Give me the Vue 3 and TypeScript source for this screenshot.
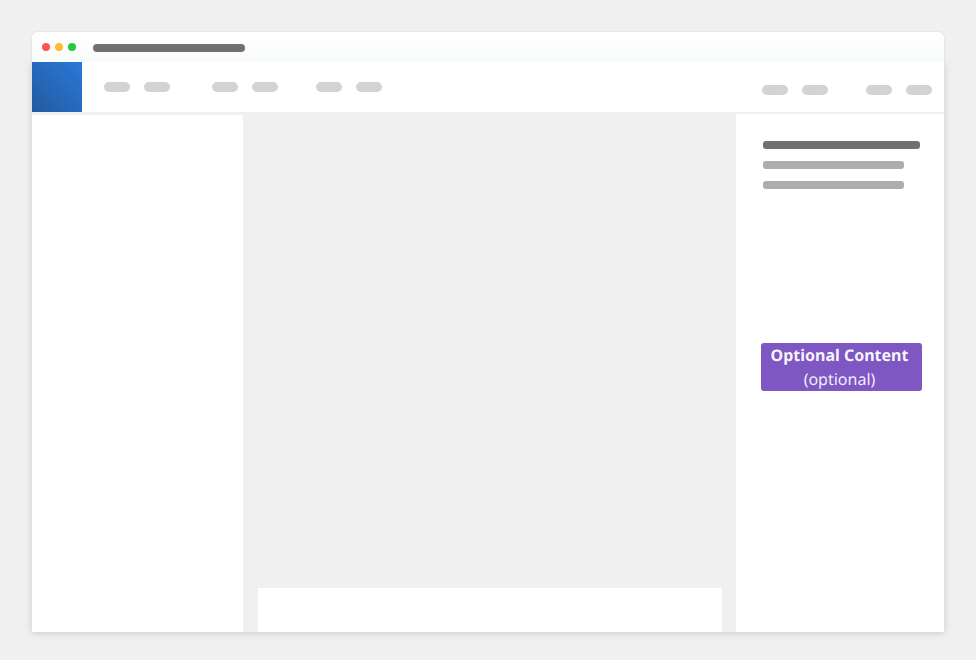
<script setup lang="ts">
const leftGroups = [2, 2, 2]
const rightGroups = [2, 2]
</script>

<template>
  <div class="page">
    <div class="window">
      <div class="titlebar">
        <div class="dots">
          <span class="dot red"></span>
          <span class="dot yellow"></span>
          <span class="dot green"></span>
        </div>
        <div class="url"></div>
      </div>

      <div class="content">
        <div class="nav">
          <div class="logo"></div>
          <div class="nav-left">
            <div v-for="(n, i) in leftGroups" :key="i" class="pill-group">
              <span v-for="p in n" :key="p" class="pill"></span>
            </div>
          </div>
          <div class="nav-right">
            <div v-for="(n, i) in rightGroups" :key="i" class="pill-group">
              <span v-for="p in n" :key="p" class="pill"></span>
            </div>
          </div>
        </div>

        <div class="body">
          <aside class="sidebar"></aside>
          <main class="main">
            <div class="card"></div>
          </main>
          <aside class="panel">
            <div class="lines">
              <div class="line dark"></div>
              <div class="line"></div>
              <div class="line"></div>
            </div>
            <div class="badge">
              <strong>Optional Content</strong>
              <span>(optional)</span>
            </div>
          </aside>
        </div>
      </div>
    </div>
  </div>
</template>

<style>
html,
body {
  margin: 0;
  background: #f0f0f0;
}
</style>

<style scoped>
.page {
  width: 976px;
  height: 660px;
  box-sizing: border-box;
  padding: 32px;
  background: #f0f0f0;
  overflow: hidden;
}
.window {
  width: 912px;
  height: 600px;
  display: flex;
  flex-direction: column;
}
.titlebar {
  position: relative;
  z-index: 1;
  height: 30px;
  flex: none;
  display: flex;
  align-items: center;
  border-radius: 6px 6px 0 0;
  background: linear-gradient(#ffffff, #f9fbfb);
  box-shadow: 0 0 2px rgba(0, 0, 0, 0.14);
  clip-path: inset(-3px -3px 0 -3px);
}
.dots {
  display: flex;
  gap: 5px;
  margin-left: 10px;
}
.dot {
  width: 8px;
  height: 8px;
  border-radius: 50%;
}
.red {
  background: #ff5252;
}
.yellow {
  background: #ffbd2e;
}
.green {
  background: #27c93f;
}
.url {
  width: 152px;
  height: 8px;
  margin-left: 17px;
  margin-top: 1px;
  border-radius: 4px;
  background: #707070;
}
.content {
  flex: 1;
  min-height: 0;
  display: flex;
  flex-direction: column;
  background: #f0f0f0;
  box-shadow: 0 1px 7px rgba(0, 0, 0, 0.16);
}
.nav {
  height: 50px;
  flex: none;
  display: flex;
  background: #fff;
}
.logo {
  width: 50px;
  height: 50px;
  background: linear-gradient(45deg, #235a9e, #2a79d8);
}
.nav-left {
  display: flex;
  gap: 38px;
  margin-left: 22px;
  padding-top: 20px;
}
.nav-left .pill-group:first-child {
  margin-right: 4px;
}
.nav-right {
  display: flex;
  gap: 38px;
  margin-left: auto;
  margin-right: 12px;
  padding-top: 23px;
}
.pill-group {
  display: flex;
  gap: 14px;
}
.pill {
  width: 26px;
  height: 10px;
  border-radius: 5px;
  background: #d3d3d3;
}
.body {
  flex: 1;
  min-height: 0;
  display: flex;
}
.sidebar {
  width: 211px;
  margin-top: 3px;
  background: #fff;
}
.main {
  flex: 1;
  display: flex;
  align-items: flex-end;
  padding: 0 14px 0 15px;
}
.card {
  flex: 1;
  height: 44px;
  background: #fff;
}
.panel {
  width: 208px;
  margin-top: 2px;
  box-sizing: border-box;
  padding: 27px 24px 0 27px;
  background: #fff;
}
.lines {
  display: flex;
  flex-direction: column;
  gap: 12px;
}
.line {
  width: 141px;
  height: 8px;
  border-radius: 3px;
  background: #adadad;
}
.line.dark {
  width: 157px;
  background: #707070;
}
.badge {
  width: 161px;
  height: 48px;
  box-sizing: border-box;
  margin: 154px 0 0 -2px;
  padding-right: 4px;
  display: flex;
  flex-direction: column;
  align-items: center;
  border-radius: 3px;
  background: #7e57c2;
  color: #fff;
  font-family: "Noto Sans", "Open Sans", sans-serif;
  font-size: 16px;
  line-height: 24px;
  text-rendering: geometricPrecision;
}
.badge strong {
  font-weight: 700;
  color: rgba(255, 255, 255, 0.94);
}
.badge span {
  font-weight: 400;
  color: rgba(255, 255, 255, 0.92);
}
</style>
